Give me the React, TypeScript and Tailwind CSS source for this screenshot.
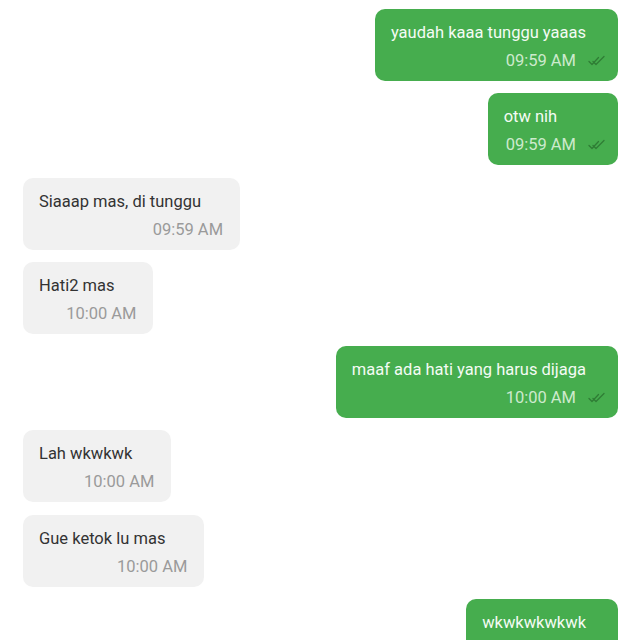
const messages = [
  { id: 1, mine: true, text: 'yaudah kaaa tunggu yaaas', time: '09:59 AM' },
  { id: 2, mine: true, text: 'otw nih', time: '09:59 AM' },
  { id: 3, mine: false, text: 'Siaaap mas, di tunggu', time: '09:59 AM' },
  { id: 4, mine: false, text: 'Hati2 mas', time: '10:00 AM' },
  { id: 5, mine: true, text: 'maaf ada hati yang harus dijaga', time: '10:00 AM' },
  { id: 6, mine: false, text: 'Lah wkwkwk', time: '10:00 AM' },
  { id: 7, mine: false, text: 'Gue ketok lu mas', time: '10:00 AM' },
  { id: 8, mine: true, text: 'wkwkwkwkwk', time: '10:00 AM' },
]

function DoubleCheck() {
  return (
    <svg width="18" height="12" viewBox="0 0 18 12" fill="none" stroke="#2f7d35" strokeWidth="1.3" strokeLinecap="round" strokeLinejoin="round">
      <path d="M1 6.5 L4 9.5 L10.5 2.5" />
      <path d="M5 6.5 L8 9.5 L16 1.5" />
    </svg>
  )
}

export default function App() {
  return (
    <div className="min-h-screen bg-white pt-[9px] pl-[23px] pr-[22px] flex flex-col gap-[12.3px]" style={{ fontFamily: 'Roboto, "Liberation Sans", sans-serif' }}>
      {messages.map(m => (
        <div key={m.id} className={m.mine ? 'flex justify-end' : 'flex justify-start'}>
          {m.mine ? (
            <div className="bg-[#46ad4e] rounded-[10px] pl-4 pr-3 pt-3 h-[72px] shrink-0">
              <p className="text-[16.5px] leading-6 text-[#f4fbf4] pr-5 whitespace-nowrap">{m.text}</p>
              <div className="flex items-center justify-end gap-[12px] mt-[4px]">
                <span className="text-[16.5px] leading-6 text-[#cdeacd] pl-[2px]">{m.time}</span>
                <DoubleCheck />
              </div>
            </div>
          ) : (
            <div className="bg-[#f1f1f1] rounded-[10px] pl-4 pr-[17px] pt-3 h-[72px]">
              <p className="text-[16.5px] leading-6 text-[#333333] pr-[22px] whitespace-nowrap">{m.text}</p>
              <div className="flex justify-end mt-[4px]">
                <span className="text-[16.5px] leading-6 text-[#9a9a9a] pl-[25px]">{m.time}</span>
              </div>
            </div>
          )}
        </div>
      ))}
    </div>
  )
}
